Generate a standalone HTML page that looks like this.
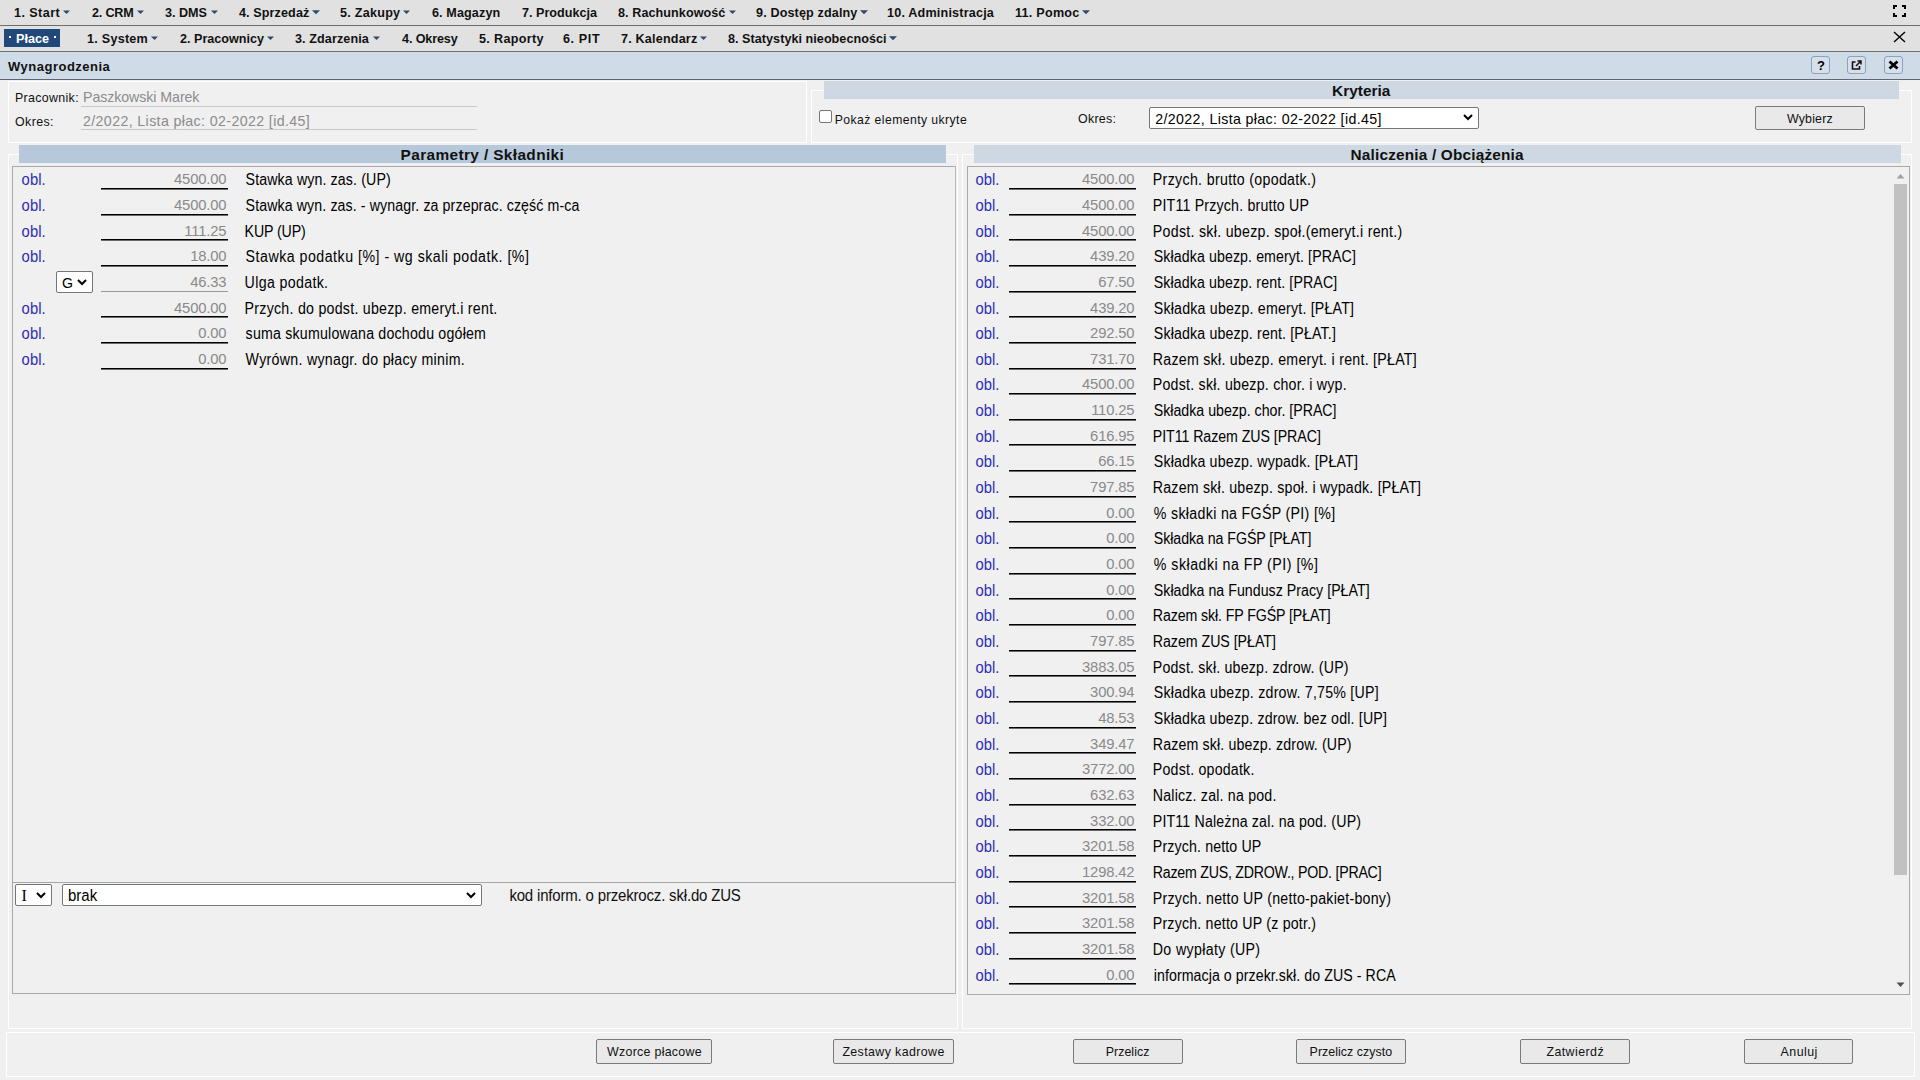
<!DOCTYPE html>
<html><head><meta charset="utf-8"><title>Wynagrodzenia</title>
<style>
html,body{margin:0;padding:0;width:1920px;height:1080px;overflow:hidden;background:#f0f0f0;font-family:"Liberation Sans", sans-serif;}
.t{position:absolute;white-space:pre;line-height:1;}
</style></head><body>
<div style="position:absolute;left:0px;top:0px;width:1920px;height:25px;background:#e1e1e1"></div><div style="position:absolute;left:0px;top:25px;width:1920px;height:1px;background:#6e6e6e"></div><div style="position:absolute;left:0px;top:26px;width:1920px;height:25px;background:#e1e1e1"></div><div style="position:absolute;left:0px;top:51px;width:1920px;height:1px;background:#6e6e6e"></div><div style="position:absolute;left:0px;top:52px;width:1920px;height:27px;background:#cfdbe6"></div><div style="position:absolute;left:0px;top:79px;width:1920px;height:1px;background:#5f6470"></div><svg style="position:absolute;left:63px;top:10px" width="7" height="5" viewBox="0 0 7 4"><path d="M0 0H7L3.5 3.5Z" fill="#2d4a6b"/></svg><svg style="position:absolute;left:137px;top:10px" width="7" height="5" viewBox="0 0 7 4"><path d="M0 0H7L3.5 3.5Z" fill="#2d4a6b"/></svg><svg style="position:absolute;left:211px;top:10px" width="7" height="5" viewBox="0 0 7 4"><path d="M0 0H7L3.5 3.5Z" fill="#2d4a6b"/></svg><svg style="position:absolute;left:312px;top:10px" width="8" height="5" viewBox="0 0 7 4"><path d="M0 0H7L3.5 3.5Z" fill="#2d4a6b"/></svg><svg style="position:absolute;left:403px;top:10px" width="7" height="5" viewBox="0 0 7 4"><path d="M0 0H7L3.5 3.5Z" fill="#2d4a6b"/></svg><svg style="position:absolute;left:729px;top:10px" width="7" height="5" viewBox="0 0 7 4"><path d="M0 0H7L3.5 3.5Z" fill="#2d4a6b"/></svg><svg style="position:absolute;left:860px;top:10px" width="8" height="5" viewBox="0 0 7 4"><path d="M0 0H7L3.5 3.5Z" fill="#2d4a6b"/></svg><svg style="position:absolute;left:1082px;top:10px" width="8" height="5" viewBox="0 0 7 4"><path d="M0 0H7L3.5 3.5Z" fill="#2d4a6b"/></svg><div style="position:absolute;left:4px;top:29px;width:56px;height:18px;background:#20487a"></div><div style="position:absolute;left:9px;top:36px;width:2px;height:2px;background:#fff"></div><div style="position:absolute;left:54px;top:36px;width:2px;height:2px;background:#fff"></div><svg style="position:absolute;left:151px;top:36px" width="7" height="5" viewBox="0 0 7 4"><path d="M0 0H7L3.5 3.5Z" fill="#2d4a6b"/></svg><svg style="position:absolute;left:267px;top:36px" width="7" height="5" viewBox="0 0 7 4"><path d="M0 0H7L3.5 3.5Z" fill="#2d4a6b"/></svg><svg style="position:absolute;left:373px;top:36px" width="7" height="5" viewBox="0 0 7 4"><path d="M0 0H7L3.5 3.5Z" fill="#2d4a6b"/></svg><svg style="position:absolute;left:700px;top:36px" width="7" height="5" viewBox="0 0 7 4"><path d="M0 0H7L3.5 3.5Z" fill="#2d4a6b"/></svg><svg style="position:absolute;left:889px;top:36px" width="8" height="5" viewBox="0 0 7 4"><path d="M0 0H7L3.5 3.5Z" fill="#2d4a6b"/></svg><svg style="position:absolute;left:1893px;top:5px" width="13" height="12" viewBox="0 0 13 12"><path d="M1 4V1H4M9 1H12V4M12 8V11H9M4 11H1V8" fill="none" stroke="#000" stroke-width="2"/></svg><svg style="position:absolute;left:1893px;top:31px" width="13" height="12" viewBox="0 0 13 12"><path d="M1 1L12 11M12 1L1 11" fill="none" stroke="#000" stroke-width="1.4"/></svg><div style="position:absolute;left:1811px;top:56px;width:19px;height:18px;box-sizing:border-box;border:1px solid #8e9fbf;border-radius:3px;background:#d6e0ea"></div><div style="position:absolute;left:1847px;top:56px;width:19px;height:18px;box-sizing:border-box;border:1px solid #8e9fbf;border-radius:3px;background:#d6e0ea"></div><div style="position:absolute;left:1884px;top:56px;width:19px;height:18px;box-sizing:border-box;border:1px solid #8e9fbf;border-radius:3px;background:#d6e0ea"></div><svg style="position:absolute;left:1851px;top:60px" width="11" height="10" viewBox="0 0 11 10"><path d="M4.5 2H1.5V9H8.5V6" fill="none" stroke="#111" stroke-width="1.6"/><path d="M5 6L9.5 1.5M6.5 1H10V4.5" fill="none" stroke="#111" stroke-width="1.5"/></svg><svg style="position:absolute;left:1888px;top:60px" width="11" height="10" viewBox="0 0 11 10"><path d="M1.5 1.5L9.5 8.5M9.5 1.5L1.5 8.5" fill="none" stroke="#000" stroke-width="2.8"/></svg><div style="position:absolute;left:8px;top:81px;width:799px;height:62px;box-sizing:border-box;border:1px solid #fff"></div><div style="position:absolute;left:81px;top:106px;width:396px;height:1px;background:#c8c8c8"></div><div style="position:absolute;left:81px;top:129px;width:396px;height:1px;background:#c8c8c8"></div><div style="position:absolute;left:811px;top:90px;width:1101px;height:53px;box-sizing:border-box;border:1px solid #fff"></div><div style="position:absolute;left:824px;top:81px;width:1075px;height:18px;background:#cdd8e2"></div><div style="position:absolute;left:819px;top:110px;width:13px;height:13px;box-sizing:border-box;border:1px solid #767676;border-radius:2px;background:#fff"></div><div style="position:absolute;left:1149px;top:107px;width:330px;height:22px;box-sizing:border-box;border:1px solid #767676;border-radius:2px;background:#fff"></div><svg style="position:absolute;left:1463px;top:114px" width="10" height="7" viewBox="0 0 10 7"><path d="M1 1L5 5L9 1" fill="none" stroke="#000" stroke-width="2"/></svg><div style="position:absolute;left:1755px;top:106px;width:110px;height:24px;box-sizing:border-box;border:1px solid #7a7a7a;border-radius:2px;background:#e9e9e9"></div><div style="position:absolute;left:8px;top:154px;width:950px;height:875px;box-sizing:border-box;border:1px solid #fff"></div><div style="position:absolute;left:962px;top:154px;width:950px;height:875px;box-sizing:border-box;border:1px solid #fff"></div><div style="position:absolute;left:19px;top:145px;width:927px;height:18px;background:#b6c8da"></div><div style="position:absolute;left:974px;top:145px;width:927px;height:18px;background:#cdd8e2"></div><div style="position:absolute;left:12px;top:166px;width:944px;height:828px;box-sizing:border-box;border:1px solid #aaaaaa;border-right-color:#b8b8b8"></div><div style="position:absolute;left:967px;top:166px;width:943px;height:829px;box-sizing:border-box;border:1px solid #aaaaaa"></div><div style="position:absolute;left:101px;top:188px;width:127px;height:2px;background:linear-gradient(#000 50%,#6a6a6a 50%)"></div><div style="position:absolute;left:101px;top:214px;width:127px;height:2px;background:linear-gradient(#000 50%,#6a6a6a 50%)"></div><div style="position:absolute;left:101px;top:239px;width:127px;height:2px;background:linear-gradient(#000 50%,#6a6a6a 50%)"></div><div style="position:absolute;left:101px;top:265px;width:127px;height:2px;background:linear-gradient(#000 50%,#6a6a6a 50%)"></div><div style="position:absolute;left:101px;top:291px;width:127px;height:1px;background:#9a9a9a"></div><div style="position:absolute;left:56px;top:271px;width:37px;height:22px;box-sizing:border-box;border:1px solid #767676;border-radius:2px;background:#fff"></div><svg style="position:absolute;left:77px;top:279px" width="10" height="7" viewBox="0 0 10 7"><path d="M1 1L5 5L9 1" fill="none" stroke="#000" stroke-width="2"/></svg><div style="position:absolute;left:101px;top:316px;width:127px;height:2px;background:linear-gradient(#000 50%,#6a6a6a 50%)"></div><div style="position:absolute;left:101px;top:342px;width:127px;height:2px;background:linear-gradient(#000 50%,#6a6a6a 50%)"></div><div style="position:absolute;left:101px;top:368px;width:127px;height:2px;background:linear-gradient(#000 50%,#6a6a6a 50%)"></div><div style="position:absolute;left:1009px;top:188px;width:127px;height:2px;background:linear-gradient(#000 50%,#6a6a6a 50%)"></div><div style="position:absolute;left:1009px;top:214px;width:127px;height:2px;background:linear-gradient(#000 50%,#6a6a6a 50%)"></div><div style="position:absolute;left:1009px;top:239px;width:127px;height:2px;background:linear-gradient(#000 50%,#6a6a6a 50%)"></div><div style="position:absolute;left:1009px;top:265px;width:127px;height:2px;background:linear-gradient(#000 50%,#6a6a6a 50%)"></div><div style="position:absolute;left:1009px;top:291px;width:127px;height:2px;background:linear-gradient(#000 50%,#6a6a6a 50%)"></div><div style="position:absolute;left:1009px;top:316px;width:127px;height:2px;background:linear-gradient(#000 50%,#6a6a6a 50%)"></div><div style="position:absolute;left:1009px;top:342px;width:127px;height:2px;background:linear-gradient(#000 50%,#6a6a6a 50%)"></div><div style="position:absolute;left:1009px;top:368px;width:127px;height:2px;background:linear-gradient(#000 50%,#6a6a6a 50%)"></div><div style="position:absolute;left:1009px;top:393px;width:127px;height:2px;background:linear-gradient(#000 50%,#6a6a6a 50%)"></div><div style="position:absolute;left:1009px;top:419px;width:127px;height:2px;background:linear-gradient(#000 50%,#6a6a6a 50%)"></div><div style="position:absolute;left:1009px;top:444px;width:127px;height:2px;background:linear-gradient(#000 50%,#6a6a6a 50%)"></div><div style="position:absolute;left:1009px;top:470px;width:127px;height:2px;background:linear-gradient(#000 50%,#6a6a6a 50%)"></div><div style="position:absolute;left:1009px;top:496px;width:127px;height:2px;background:linear-gradient(#000 50%,#6a6a6a 50%)"></div><div style="position:absolute;left:1009px;top:521px;width:127px;height:2px;background:linear-gradient(#000 50%,#6a6a6a 50%)"></div><div style="position:absolute;left:1009px;top:547px;width:127px;height:2px;background:linear-gradient(#000 50%,#6a6a6a 50%)"></div><div style="position:absolute;left:1009px;top:573px;width:127px;height:2px;background:linear-gradient(#000 50%,#6a6a6a 50%)"></div><div style="position:absolute;left:1009px;top:598px;width:127px;height:2px;background:linear-gradient(#000 50%,#6a6a6a 50%)"></div><div style="position:absolute;left:1009px;top:624px;width:127px;height:2px;background:linear-gradient(#000 50%,#6a6a6a 50%)"></div><div style="position:absolute;left:1009px;top:650px;width:127px;height:2px;background:linear-gradient(#000 50%,#6a6a6a 50%)"></div><div style="position:absolute;left:1009px;top:675px;width:127px;height:2px;background:linear-gradient(#000 50%,#6a6a6a 50%)"></div><div style="position:absolute;left:1009px;top:701px;width:127px;height:2px;background:linear-gradient(#000 50%,#6a6a6a 50%)"></div><div style="position:absolute;left:1009px;top:727px;width:127px;height:2px;background:linear-gradient(#000 50%,#6a6a6a 50%)"></div><div style="position:absolute;left:1009px;top:752px;width:127px;height:2px;background:linear-gradient(#000 50%,#6a6a6a 50%)"></div><div style="position:absolute;left:1009px;top:778px;width:127px;height:2px;background:linear-gradient(#000 50%,#6a6a6a 50%)"></div><div style="position:absolute;left:1009px;top:804px;width:127px;height:2px;background:linear-gradient(#000 50%,#6a6a6a 50%)"></div><div style="position:absolute;left:1009px;top:829px;width:127px;height:2px;background:linear-gradient(#000 50%,#6a6a6a 50%)"></div><div style="position:absolute;left:1009px;top:855px;width:127px;height:2px;background:linear-gradient(#000 50%,#6a6a6a 50%)"></div><div style="position:absolute;left:1009px;top:881px;width:127px;height:2px;background:linear-gradient(#000 50%,#6a6a6a 50%)"></div><div style="position:absolute;left:1009px;top:906px;width:127px;height:2px;background:linear-gradient(#000 50%,#6a6a6a 50%)"></div><div style="position:absolute;left:1009px;top:932px;width:127px;height:2px;background:linear-gradient(#000 50%,#6a6a6a 50%)"></div><div style="position:absolute;left:1009px;top:958px;width:127px;height:2px;background:linear-gradient(#000 50%,#6a6a6a 50%)"></div><div style="position:absolute;left:1009px;top:983px;width:127px;height:2px;background:linear-gradient(#000 50%,#6a6a6a 50%)"></div><div style="position:absolute;left:1894px;top:184px;width:13px;height:691px;background:#c1c1c1"></div><svg style="position:absolute;left:1896px;top:173px" width="9" height="6" viewBox="0 0 9 6"><path d="M0.5 5.5H8.5L4.5 1Z" fill="#a0a0a0"/></svg><svg style="position:absolute;left:1896px;top:982px" width="9" height="6" viewBox="0 0 9 6"><path d="M0.5 0.5H8.5L4.5 5Z" fill="#505050"/></svg><div style="position:absolute;left:13px;top:882px;width:942px;height:1px;background:#a6a6a6"></div><div style="position:absolute;left:15px;top:884px;width:37px;height:22px;box-sizing:border-box;border:1px solid #767676;border-radius:2px;background:#fff"></div><svg style="position:absolute;left:36px;top:892px" width="10" height="7" viewBox="0 0 10 7"><path d="M1 1L5 5L9 1" fill="none" stroke="#000" stroke-width="2"/></svg><div style="position:absolute;left:62px;top:884px;width:420px;height:22px;box-sizing:border-box;border:1px solid #767676;border-radius:2px;background:#fff"></div><svg style="position:absolute;left:466px;top:892px" width="10" height="7" viewBox="0 0 10 7"><path d="M1 1L5 5L9 1" fill="none" stroke="#000" stroke-width="2"/></svg><div style="position:absolute;left:6px;top:1032px;width:1909px;height:45px;box-sizing:border-box;border:1px solid #fff"></div><div style="position:absolute;left:596px;top:1039px;width:116px;height:25px;box-sizing:border-box;border:1px solid #7a7a7a;border-radius:2px;background:#e9e9e9"></div><div style="position:absolute;left:833px;top:1039px;width:121px;height:25px;box-sizing:border-box;border:1px solid #7a7a7a;border-radius:2px;background:#e9e9e9"></div><div style="position:absolute;left:1073px;top:1039px;width:110px;height:25px;box-sizing:border-box;border:1px solid #7a7a7a;border-radius:2px;background:#e9e9e9"></div><div style="position:absolute;left:1296px;top:1039px;width:110px;height:25px;box-sizing:border-box;border:1px solid #7a7a7a;border-radius:2px;background:#e9e9e9"></div><div style="position:absolute;left:1520px;top:1039px;width:110px;height:25px;box-sizing:border-box;border:1px solid #7a7a7a;border-radius:2px;background:#e9e9e9"></div><div style="position:absolute;left:1744px;top:1039px;width:109px;height:25px;box-sizing:border-box;border:1px solid #7a7a7a;border-radius:2px;background:#e9e9e9"></div>
<span class="t" style="top:7.00px;font-size:12.6px;font-weight:700;color:#111;letter-spacing:0.429px;left:14.00px;">1. Start</span><span class="t" style="top:7.00px;font-size:12.6px;font-weight:700;color:#111;letter-spacing:-0.200px;left:92.00px;">2. CRM</span><span class="t" style="top:7.00px;font-size:12.6px;font-weight:700;color:#111;left:165.00px;">3. DMS</span><span class="t" style="top:7.00px;font-size:12.6px;font-weight:700;color:#111;letter-spacing:0.100px;left:239.00px;">4. Sprzedaż</span><span class="t" style="top:7.00px;font-size:12.6px;font-weight:700;color:#111;letter-spacing:0.250px;left:340.00px;">5. Zakupy</span><span class="t" style="top:7.00px;font-size:12.6px;font-weight:700;color:#111;letter-spacing:0.111px;left:432.00px;">6. Magazyn</span><span class="t" style="top:7.00px;font-size:12.6px;font-weight:700;color:#111;left:522.00px;">7. Produkcja</span><span class="t" style="top:7.00px;font-size:12.6px;font-weight:700;color:#111;letter-spacing:0.071px;left:618.00px;">8. Rachunkowość</span><span class="t" style="top:7.00px;font-size:12.6px;font-weight:700;color:#111;letter-spacing:0.133px;left:756.00px;">9. Dostęp zdalny</span><span class="t" style="top:7.00px;font-size:12.6px;font-weight:700;color:#111;letter-spacing:0.188px;left:887.00px;">10. Administracja</span><span class="t" style="top:7.00px;font-size:12.6px;font-weight:700;color:#111;letter-spacing:0.250px;left:1015.00px;">11. Pomoc</span><span class="t" style="top:33.00px;font-size:12.6px;font-weight:700;color:#fff;left:16.00px;">Płace</span><span class="t" style="top:33.00px;font-size:12.6px;font-weight:700;color:#111;letter-spacing:0.250px;left:87.00px;">1. System</span><span class="t" style="top:33.00px;font-size:12.6px;font-weight:700;color:#111;left:180.00px;">2. Pracownicy</span><span class="t" style="top:33.00px;font-size:12.6px;font-weight:700;color:#111;letter-spacing:0.091px;left:295.00px;">3. Zdarzenia</span><span class="t" style="top:33.00px;font-size:12.6px;font-weight:700;color:#111;letter-spacing:-0.125px;left:402.00px;">4. Okresy</span><span class="t" style="top:33.00px;font-size:12.6px;font-weight:700;color:#111;letter-spacing:0.333px;left:479.00px;">5. Raporty</span><span class="t" style="top:33.00px;font-size:12.6px;font-weight:700;color:#111;letter-spacing:0.600px;left:563.00px;">6. PIT</span><span class="t" style="top:33.00px;font-size:12.6px;font-weight:700;color:#111;letter-spacing:0.182px;left:621.00px;">7. Kalendarz</span><span class="t" style="top:33.00px;font-size:12.6px;font-weight:700;color:#111;letter-spacing:0.040px;left:728.00px;">8. Statystyki nieobecności</span><span class="t" style="top:60.00px;font-size:13px;font-weight:700;color:#111;letter-spacing:0.500px;left:8.00px;">Wynagrodzenia</span><span class="t" style="top:59.00px;font-size:13px;font-weight:700;color:#000;left:1817.00px;">?</span><span class="t" style="top:92.00px;font-size:12.4px;font-weight:400;color:#111;letter-spacing:0.333px;left:15.00px;">Pracownik:</span><span class="t" style="top:90.00px;font-size:14.2px;font-weight:400;color:#8c8c8c;letter-spacing:-0.067px;left:83.00px;">Paszkowski Marek</span><span class="t" style="top:116.00px;font-size:12.4px;font-weight:400;color:#111;letter-spacing:0.400px;left:15.00px;">Okres:</span><span class="t" style="top:114.00px;font-size:14.2px;font-weight:400;color:#8c8c8c;letter-spacing:0.382px;left:83.00px;">2/2022, Lista płac: 02-2022 [id.45]</span><span class="t" style="top:83.00px;font-size:15.4px;font-weight:700;color:#111;letter-spacing:0.036px;left:1332.00px;">Kryteria</span><span class="t" style="top:114.00px;font-size:12.2px;font-weight:400;color:#111;letter-spacing:0.430px;left:834.79px;">Pokaż elementy ukryte</span><span class="t" style="top:113.00px;font-size:12.4px;font-weight:400;color:#111;letter-spacing:0.300px;left:1078.00px;">Okres:</span><span class="t" style="top:112.00px;font-size:14.2px;font-weight:400;color:#000;letter-spacing:0.368px;left:1155.19px;">2/2022, Lista płac: 02-2022 [id.45]</span><span class="t" style="top:113.00px;font-size:12.4px;font-weight:400;color:#111;letter-spacing:0.167px;left:1787.00px;">Wybierz</span><span class="t" style="top:147.00px;font-size:15.4px;font-weight:700;color:#111;letter-spacing:0.375px;left:400.60px;">Parametry / Składniki</span><span class="t" style="top:147.00px;font-size:15.4px;font-weight:700;color:#111;letter-spacing:0.164px;left:1350.60px;">Naliczenia / Obciążenia</span><span class="t" style="top:173.00px;font-size:14.8px;font-weight:400;color:#2e2eb4;letter-spacing:0.067px;left:21.60px;transform:scaleY(1.09);transform-origin:0 12px;">obl.</span><span class="t" style="top:172.00px;font-size:14.8px;font-weight:400;color:#8a8a8a;letter-spacing:-0.150px;right:1693.60px;transform:scaleY(1.04);transform-origin:0 12px;">4500.00</span><span class="t" style="top:173.00px;font-size:14.2px;font-weight:400;color:#000;letter-spacing:0.120px;left:245.60px;transform:scaleY(1.115);transform-origin:0 12px;">Stawka wyn. zas. (UP)</span><span class="t" style="top:199.00px;font-size:14.8px;font-weight:400;color:#2e2eb4;letter-spacing:0.067px;left:21.60px;transform:scaleY(1.09);transform-origin:0 12px;">obl.</span><span class="t" style="top:198.00px;font-size:14.8px;font-weight:400;color:#8a8a8a;letter-spacing:-0.150px;right:1693.60px;transform:scaleY(1.04);transform-origin:0 12px;">4500.00</span><span class="t" style="top:199.00px;font-size:14.2px;font-weight:400;color:#000;letter-spacing:0.102px;left:245.60px;transform:scaleY(1.115);transform-origin:0 12px;">Stawka wyn. zas. - wynagr. za przeprac. część m-ca</span><span class="t" style="top:225.00px;font-size:14.8px;font-weight:400;color:#2e2eb4;letter-spacing:0.067px;left:21.60px;transform:scaleY(1.09);transform-origin:0 12px;">obl.</span><span class="t" style="top:224.00px;font-size:14.8px;font-weight:400;color:#8a8a8a;letter-spacing:-0.150px;right:1693.60px;transform:scaleY(1.04);transform-origin:0 12px;">111.25</span><span class="t" style="top:225.00px;font-size:14.2px;font-weight:400;color:#000;letter-spacing:-0.114px;left:244.60px;transform:scaleY(1.115);transform-origin:0 12px;">KUP (UP)</span><span class="t" style="top:250.00px;font-size:14.8px;font-weight:400;color:#2e2eb4;letter-spacing:0.067px;left:21.60px;transform:scaleY(1.09);transform-origin:0 12px;">obl.</span><span class="t" style="top:249.00px;font-size:14.8px;font-weight:400;color:#8a8a8a;letter-spacing:-0.150px;right:1693.60px;transform:scaleY(1.04);transform-origin:0 12px;">18.00</span><span class="t" style="top:250.00px;font-size:14.2px;font-weight:400;color:#000;letter-spacing:0.498px;left:245.60px;transform:scaleY(1.115);transform-origin:0 12px;">Stawka podatku [%] - wg skali podatk. [%]</span><span class="t" style="top:276.00px;font-size:14.2px;font-weight:400;color:#000;left:62.00px;">G</span><span class="t" style="top:275.00px;font-size:14.8px;font-weight:400;color:#8a8a8a;letter-spacing:-0.150px;right:1693.60px;transform:scaleY(1.04);transform-origin:0 12px;">46.33</span><span class="t" style="top:276.00px;font-size:14.2px;font-weight:400;color:#000;letter-spacing:0.345px;left:244.60px;transform:scaleY(1.115);transform-origin:0 12px;">Ulga podatk.</span><span class="t" style="top:302.00px;font-size:14.8px;font-weight:400;color:#2e2eb4;letter-spacing:0.067px;left:21.60px;transform:scaleY(1.09);transform-origin:0 12px;">obl.</span><span class="t" style="top:301.00px;font-size:14.8px;font-weight:400;color:#8a8a8a;letter-spacing:-0.150px;right:1693.60px;transform:scaleY(1.04);transform-origin:0 12px;">4500.00</span><span class="t" style="top:302.00px;font-size:14.2px;font-weight:400;color:#000;letter-spacing:0.258px;left:244.60px;transform:scaleY(1.115);transform-origin:0 12px;">Przych. do podst. ubezp. emeryt.i rent.</span><span class="t" style="top:327.00px;font-size:14.8px;font-weight:400;color:#2e2eb4;letter-spacing:0.067px;left:21.60px;transform:scaleY(1.09);transform-origin:0 12px;">obl.</span><span class="t" style="top:326.00px;font-size:14.8px;font-weight:400;color:#8a8a8a;letter-spacing:-0.150px;right:1693.60px;transform:scaleY(1.04);transform-origin:0 12px;">0.00</span><span class="t" style="top:327.00px;font-size:14.2px;font-weight:400;color:#000;letter-spacing:0.203px;left:245.60px;transform:scaleY(1.115);transform-origin:0 12px;">suma skumulowana dochodu ogółem</span><span class="t" style="top:353.00px;font-size:14.8px;font-weight:400;color:#2e2eb4;letter-spacing:0.067px;left:21.60px;transform:scaleY(1.09);transform-origin:0 12px;">obl.</span><span class="t" style="top:352.00px;font-size:14.8px;font-weight:400;color:#8a8a8a;letter-spacing:-0.150px;right:1693.60px;transform:scaleY(1.04);transform-origin:0 12px;">0.00</span><span class="t" style="top:353.00px;font-size:14.2px;font-weight:400;color:#000;letter-spacing:0.290px;left:245.60px;transform:scaleY(1.115);transform-origin:0 12px;">Wyrówn. wynagr. do płacy minim.</span><span class="t" style="top:173.00px;font-size:14.8px;font-weight:400;color:#2e2eb4;letter-spacing:0.067px;left:975.39px;transform:scaleY(1.09);transform-origin:0 12px;">obl.</span><span class="t" style="top:172.00px;font-size:14.8px;font-weight:400;color:#8a8a8a;letter-spacing:-0.150px;right:785.60px;transform:scaleY(1.04);transform-origin:0 12px;">4500.00</span><span class="t" style="top:173.00px;font-size:14.2px;font-weight:400;color:#000;letter-spacing:0.329px;left:1152.79px;transform:scaleY(1.115);transform-origin:0 12px;">Przych. brutto (opodatk.)</span><span class="t" style="top:199.00px;font-size:14.8px;font-weight:400;color:#2e2eb4;letter-spacing:0.067px;left:975.39px;transform:scaleY(1.09);transform-origin:0 12px;">obl.</span><span class="t" style="top:198.00px;font-size:14.8px;font-weight:400;color:#8a8a8a;letter-spacing:-0.150px;right:785.60px;transform:scaleY(1.04);transform-origin:0 12px;">4500.00</span><span class="t" style="top:199.00px;font-size:14.2px;font-weight:400;color:#000;letter-spacing:0.191px;left:1152.79px;transform:scaleY(1.115);transform-origin:0 12px;">PIT11 Przych. brutto UP</span><span class="t" style="top:225.00px;font-size:14.8px;font-weight:400;color:#2e2eb4;letter-spacing:0.067px;left:975.39px;transform:scaleY(1.09);transform-origin:0 12px;">obl.</span><span class="t" style="top:224.00px;font-size:14.8px;font-weight:400;color:#8a8a8a;letter-spacing:-0.150px;right:785.60px;transform:scaleY(1.04);transform-origin:0 12px;">4500.00</span><span class="t" style="top:225.00px;font-size:14.2px;font-weight:400;color:#000;letter-spacing:0.290px;left:1152.79px;transform:scaleY(1.115);transform-origin:0 12px;">Podst. skł. ubezp. społ.(emeryt.i rent.)</span><span class="t" style="top:250.00px;font-size:14.8px;font-weight:400;color:#2e2eb4;letter-spacing:0.067px;left:975.39px;transform:scaleY(1.09);transform-origin:0 12px;">obl.</span><span class="t" style="top:249.00px;font-size:14.8px;font-weight:400;color:#8a8a8a;letter-spacing:-0.150px;right:785.60px;transform:scaleY(1.04);transform-origin:0 12px;">439.20</span><span class="t" style="top:250.00px;font-size:14.2px;font-weight:400;color:#000;letter-spacing:0.093px;left:1153.79px;transform:scaleY(1.115);transform-origin:0 12px;">Składka ubezp. emeryt. [PRAC]</span><span class="t" style="top:276.00px;font-size:14.8px;font-weight:400;color:#2e2eb4;letter-spacing:0.067px;left:975.39px;transform:scaleY(1.09);transform-origin:0 12px;">obl.</span><span class="t" style="top:275.00px;font-size:14.8px;font-weight:400;color:#8a8a8a;letter-spacing:-0.150px;right:785.60px;transform:scaleY(1.04);transform-origin:0 12px;">67.50</span><span class="t" style="top:276.00px;font-size:14.2px;font-weight:400;color:#000;letter-spacing:0.108px;left:1153.79px;transform:scaleY(1.115);transform-origin:0 12px;">Składka ubezp. rent. [PRAC]</span><span class="t" style="top:302.00px;font-size:14.8px;font-weight:400;color:#2e2eb4;letter-spacing:0.067px;left:975.39px;transform:scaleY(1.09);transform-origin:0 12px;">obl.</span><span class="t" style="top:301.00px;font-size:14.8px;font-weight:400;color:#8a8a8a;letter-spacing:-0.150px;right:785.60px;transform:scaleY(1.04);transform-origin:0 12px;">439.20</span><span class="t" style="top:302.00px;font-size:14.2px;font-weight:400;color:#000;letter-spacing:0.204px;left:1153.79px;transform:scaleY(1.115);transform-origin:0 12px;">Składka ubezp. emeryt. [PŁAT]</span><span class="t" style="top:327.00px;font-size:14.8px;font-weight:400;color:#2e2eb4;letter-spacing:0.067px;left:975.39px;transform:scaleY(1.09);transform-origin:0 12px;">obl.</span><span class="t" style="top:326.00px;font-size:14.8px;font-weight:400;color:#8a8a8a;letter-spacing:-0.150px;right:785.60px;transform:scaleY(1.04);transform-origin:0 12px;">292.50</span><span class="t" style="top:327.00px;font-size:14.2px;font-weight:400;color:#000;letter-spacing:0.152px;left:1153.79px;transform:scaleY(1.115);transform-origin:0 12px;">Składka ubezp. rent. [PŁAT.]</span><span class="t" style="top:353.00px;font-size:14.8px;font-weight:400;color:#2e2eb4;letter-spacing:0.067px;left:975.39px;transform:scaleY(1.09);transform-origin:0 12px;">obl.</span><span class="t" style="top:352.00px;font-size:14.8px;font-weight:400;color:#8a8a8a;letter-spacing:-0.150px;right:785.60px;transform:scaleY(1.04);transform-origin:0 12px;">731.70</span><span class="t" style="top:353.00px;font-size:14.2px;font-weight:400;color:#000;letter-spacing:0.264px;left:1152.79px;transform:scaleY(1.115);transform-origin:0 12px;">Razem skł. ubezp. emeryt. i rent. [PŁAT]</span><span class="t" style="top:378.00px;font-size:14.8px;font-weight:400;color:#2e2eb4;letter-spacing:0.067px;left:975.39px;transform:scaleY(1.09);transform-origin:0 12px;">obl.</span><span class="t" style="top:377.00px;font-size:14.8px;font-weight:400;color:#8a8a8a;letter-spacing:-0.150px;right:785.60px;transform:scaleY(1.04);transform-origin:0 12px;">4500.00</span><span class="t" style="top:378.00px;font-size:14.2px;font-weight:400;color:#000;letter-spacing:0.233px;left:1152.79px;transform:scaleY(1.115);transform-origin:0 12px;">Podst. skł. ubezp. chor. i wyp.</span><span class="t" style="top:404.00px;font-size:14.8px;font-weight:400;color:#2e2eb4;letter-spacing:0.067px;left:975.39px;transform:scaleY(1.09);transform-origin:0 12px;">obl.</span><span class="t" style="top:403.00px;font-size:14.8px;font-weight:400;color:#8a8a8a;letter-spacing:-0.150px;right:785.60px;transform:scaleY(1.04);transform-origin:0 12px;">110.25</span><span class="t" style="top:404.00px;font-size:14.2px;font-weight:400;color:#000;letter-spacing:-0.008px;left:1153.79px;transform:scaleY(1.115);transform-origin:0 12px;">Składka ubezp. chor. [PRAC]</span><span class="t" style="top:430.00px;font-size:14.8px;font-weight:400;color:#2e2eb4;letter-spacing:0.067px;left:975.39px;transform:scaleY(1.09);transform-origin:0 12px;">obl.</span><span class="t" style="top:429.00px;font-size:14.8px;font-weight:400;color:#8a8a8a;letter-spacing:-0.150px;right:785.60px;transform:scaleY(1.04);transform-origin:0 12px;">616.95</span><span class="t" style="top:430.00px;font-size:14.2px;font-weight:400;color:#000;letter-spacing:-0.057px;left:1152.79px;transform:scaleY(1.115);transform-origin:0 12px;">PIT11 Razem ZUS [PRAC]</span><span class="t" style="top:455.00px;font-size:14.8px;font-weight:400;color:#2e2eb4;letter-spacing:0.067px;left:975.39px;transform:scaleY(1.09);transform-origin:0 12px;">obl.</span><span class="t" style="top:454.00px;font-size:14.8px;font-weight:400;color:#8a8a8a;letter-spacing:-0.150px;right:785.60px;transform:scaleY(1.04);transform-origin:0 12px;">66.15</span><span class="t" style="top:455.00px;font-size:14.2px;font-weight:400;color:#000;letter-spacing:0.171px;left:1153.79px;transform:scaleY(1.115);transform-origin:0 12px;">Składka ubezp. wypadk. [PŁAT]</span><span class="t" style="top:481.00px;font-size:14.8px;font-weight:400;color:#2e2eb4;letter-spacing:0.067px;left:975.39px;transform:scaleY(1.09);transform-origin:0 12px;">obl.</span><span class="t" style="top:480.00px;font-size:14.8px;font-weight:400;color:#8a8a8a;letter-spacing:-0.150px;right:785.60px;transform:scaleY(1.04);transform-origin:0 12px;">797.85</span><span class="t" style="top:481.00px;font-size:14.2px;font-weight:400;color:#000;letter-spacing:0.213px;left:1152.79px;transform:scaleY(1.115);transform-origin:0 12px;">Razem skł. ubezp. społ. i wypadk. [PŁAT]</span><span class="t" style="top:507.00px;font-size:14.8px;font-weight:400;color:#2e2eb4;letter-spacing:0.067px;left:975.39px;transform:scaleY(1.09);transform-origin:0 12px;">obl.</span><span class="t" style="top:506.00px;font-size:14.8px;font-weight:400;color:#8a8a8a;letter-spacing:-0.150px;right:785.60px;transform:scaleY(1.04);transform-origin:0 12px;">0.00</span><span class="t" style="top:507.00px;font-size:14.2px;font-weight:400;color:#000;letter-spacing:0.324px;left:1153.79px;transform:scaleY(1.115);transform-origin:0 12px;">% składki na FGŚP (PI) [%]</span><span class="t" style="top:532.00px;font-size:14.8px;font-weight:400;color:#2e2eb4;letter-spacing:0.067px;left:975.39px;transform:scaleY(1.09);transform-origin:0 12px;">obl.</span><span class="t" style="top:531.00px;font-size:14.8px;font-weight:400;color:#8a8a8a;letter-spacing:-0.150px;right:785.60px;transform:scaleY(1.04);transform-origin:0 12px;">0.00</span><span class="t" style="top:532.00px;font-size:14.2px;font-weight:400;color:#000;letter-spacing:-0.057px;left:1153.79px;transform:scaleY(1.115);transform-origin:0 12px;">Składka na FGŚP [PŁAT]</span><span class="t" style="top:558.00px;font-size:14.8px;font-weight:400;color:#2e2eb4;letter-spacing:0.067px;left:975.39px;transform:scaleY(1.09);transform-origin:0 12px;">obl.</span><span class="t" style="top:557.00px;font-size:14.8px;font-weight:400;color:#8a8a8a;letter-spacing:-0.150px;right:785.60px;transform:scaleY(1.04);transform-origin:0 12px;">0.00</span><span class="t" style="top:558.00px;font-size:14.2px;font-weight:400;color:#000;letter-spacing:0.496px;left:1153.79px;transform:scaleY(1.115);transform-origin:0 12px;">% składki na FP (PI) [%]</span><span class="t" style="top:584.00px;font-size:14.8px;font-weight:400;color:#2e2eb4;letter-spacing:0.067px;left:975.39px;transform:scaleY(1.09);transform-origin:0 12px;">obl.</span><span class="t" style="top:583.00px;font-size:14.8px;font-weight:400;color:#8a8a8a;letter-spacing:-0.150px;right:785.60px;transform:scaleY(1.04);transform-origin:0 12px;">0.00</span><span class="t" style="top:584.00px;font-size:14.2px;font-weight:400;color:#000;letter-spacing:0.027px;left:1153.79px;transform:scaleY(1.115);transform-origin:0 12px;">Składka na Fundusz Pracy [PŁAT]</span><span class="t" style="top:609.00px;font-size:14.8px;font-weight:400;color:#2e2eb4;letter-spacing:0.067px;left:975.39px;transform:scaleY(1.09);transform-origin:0 12px;">obl.</span><span class="t" style="top:608.00px;font-size:14.8px;font-weight:400;color:#8a8a8a;letter-spacing:-0.150px;right:785.60px;transform:scaleY(1.04);transform-origin:0 12px;">0.00</span><span class="t" style="top:609.00px;font-size:14.2px;font-weight:400;color:#000;letter-spacing:-0.108px;left:1152.79px;transform:scaleY(1.115);transform-origin:0 12px;">Razem skł. FP FGŚP [PŁAT]</span><span class="t" style="top:635.00px;font-size:14.8px;font-weight:400;color:#2e2eb4;letter-spacing:0.067px;left:975.39px;transform:scaleY(1.09);transform-origin:0 12px;">obl.</span><span class="t" style="top:634.00px;font-size:14.8px;font-weight:400;color:#8a8a8a;letter-spacing:-0.150px;right:785.60px;transform:scaleY(1.04);transform-origin:0 12px;">797.85</span><span class="t" style="top:635.00px;font-size:14.2px;font-weight:400;color:#000;letter-spacing:-0.027px;left:1152.79px;transform:scaleY(1.115);transform-origin:0 12px;">Razem ZUS [PŁAT]</span><span class="t" style="top:661.00px;font-size:14.8px;font-weight:400;color:#2e2eb4;letter-spacing:0.067px;left:975.39px;transform:scaleY(1.09);transform-origin:0 12px;">obl.</span><span class="t" style="top:660.00px;font-size:14.8px;font-weight:400;color:#8a8a8a;letter-spacing:-0.150px;right:785.60px;transform:scaleY(1.04);transform-origin:0 12px;">3883.05</span><span class="t" style="top:661.00px;font-size:14.2px;font-weight:400;color:#000;letter-spacing:0.197px;left:1152.79px;transform:scaleY(1.115);transform-origin:0 12px;">Podst. skł. ubezp. zdrow. (UP)</span><span class="t" style="top:686.00px;font-size:14.8px;font-weight:400;color:#2e2eb4;letter-spacing:0.067px;left:975.39px;transform:scaleY(1.09);transform-origin:0 12px;">obl.</span><span class="t" style="top:685.00px;font-size:14.8px;font-weight:400;color:#8a8a8a;letter-spacing:-0.150px;right:785.60px;transform:scaleY(1.04);transform-origin:0 12px;">300.94</span><span class="t" style="top:686.00px;font-size:14.2px;font-weight:400;color:#000;letter-spacing:0.232px;left:1153.79px;transform:scaleY(1.115);transform-origin:0 12px;">Składka ubezp. zdrow. 7,75% [UP]</span><span class="t" style="top:712.00px;font-size:14.8px;font-weight:400;color:#2e2eb4;letter-spacing:0.067px;left:975.39px;transform:scaleY(1.09);transform-origin:0 12px;">obl.</span><span class="t" style="top:711.00px;font-size:14.8px;font-weight:400;color:#8a8a8a;letter-spacing:-0.150px;right:785.60px;transform:scaleY(1.04);transform-origin:0 12px;">48.53</span><span class="t" style="top:712.00px;font-size:14.2px;font-weight:400;color:#000;letter-spacing:0.176px;left:1153.79px;transform:scaleY(1.115);transform-origin:0 12px;">Składka ubezp. zdrow. bez odl. [UP]</span><span class="t" style="top:738.00px;font-size:14.8px;font-weight:400;color:#2e2eb4;letter-spacing:0.067px;left:975.39px;transform:scaleY(1.09);transform-origin:0 12px;">obl.</span><span class="t" style="top:737.00px;font-size:14.8px;font-weight:400;color:#8a8a8a;letter-spacing:-0.150px;right:785.60px;transform:scaleY(1.04);transform-origin:0 12px;">349.47</span><span class="t" style="top:738.00px;font-size:14.2px;font-weight:400;color:#000;letter-spacing:0.143px;left:1152.79px;transform:scaleY(1.115);transform-origin:0 12px;">Razem skł. ubezp. zdrow. (UP)</span><span class="t" style="top:763.00px;font-size:14.8px;font-weight:400;color:#2e2eb4;letter-spacing:0.067px;left:975.39px;transform:scaleY(1.09);transform-origin:0 12px;">obl.</span><span class="t" style="top:762.00px;font-size:14.8px;font-weight:400;color:#8a8a8a;letter-spacing:-0.150px;right:785.60px;transform:scaleY(1.04);transform-origin:0 12px;">3772.00</span><span class="t" style="top:763.00px;font-size:14.2px;font-weight:400;color:#000;letter-spacing:0.214px;left:1152.79px;transform:scaleY(1.115);transform-origin:0 12px;">Podst. opodatk.</span><span class="t" style="top:789.00px;font-size:14.8px;font-weight:400;color:#2e2eb4;letter-spacing:0.067px;left:975.39px;transform:scaleY(1.09);transform-origin:0 12px;">obl.</span><span class="t" style="top:788.00px;font-size:14.8px;font-weight:400;color:#8a8a8a;letter-spacing:-0.150px;right:785.60px;transform:scaleY(1.04);transform-origin:0 12px;">632.63</span><span class="t" style="top:789.00px;font-size:14.2px;font-weight:400;color:#000;letter-spacing:0.195px;left:1152.79px;transform:scaleY(1.115);transform-origin:0 12px;">Nalicz. zal. na pod.</span><span class="t" style="top:815.00px;font-size:14.8px;font-weight:400;color:#2e2eb4;letter-spacing:0.067px;left:975.39px;transform:scaleY(1.09);transform-origin:0 12px;">obl.</span><span class="t" style="top:814.00px;font-size:14.8px;font-weight:400;color:#8a8a8a;letter-spacing:-0.150px;right:785.60px;transform:scaleY(1.04);transform-origin:0 12px;">332.00</span><span class="t" style="top:815.00px;font-size:14.2px;font-weight:400;color:#000;letter-spacing:0.167px;left:1152.79px;transform:scaleY(1.115);transform-origin:0 12px;">PIT11 Należna zal. na pod. (UP)</span><span class="t" style="top:840.00px;font-size:14.8px;font-weight:400;color:#2e2eb4;letter-spacing:0.067px;left:975.39px;transform:scaleY(1.09);transform-origin:0 12px;">obl.</span><span class="t" style="top:839.00px;font-size:14.8px;font-weight:400;color:#8a8a8a;letter-spacing:-0.150px;right:785.60px;transform:scaleY(1.04);transform-origin:0 12px;">3201.58</span><span class="t" style="top:840.00px;font-size:14.2px;font-weight:400;color:#000;letter-spacing:0.140px;left:1152.79px;transform:scaleY(1.115);transform-origin:0 12px;">Przych. netto UP</span><span class="t" style="top:866.00px;font-size:14.8px;font-weight:400;color:#2e2eb4;letter-spacing:0.067px;left:975.39px;transform:scaleY(1.09);transform-origin:0 12px;">obl.</span><span class="t" style="top:865.00px;font-size:14.8px;font-weight:400;color:#8a8a8a;letter-spacing:-0.150px;right:785.60px;transform:scaleY(1.04);transform-origin:0 12px;">1298.42</span><span class="t" style="top:866.00px;font-size:14.2px;font-weight:400;color:#000;letter-spacing:-0.238px;left:1152.79px;transform:scaleY(1.115);transform-origin:0 12px;">Razem ZUS, ZDROW., POD. [PRAC]</span><span class="t" style="top:892.00px;font-size:14.8px;font-weight:400;color:#2e2eb4;letter-spacing:0.067px;left:975.39px;transform:scaleY(1.09);transform-origin:0 12px;">obl.</span><span class="t" style="top:891.00px;font-size:14.8px;font-weight:400;color:#8a8a8a;letter-spacing:-0.150px;right:785.60px;transform:scaleY(1.04);transform-origin:0 12px;">3201.58</span><span class="t" style="top:892.00px;font-size:14.2px;font-weight:400;color:#000;letter-spacing:0.254px;left:1152.79px;transform:scaleY(1.115);transform-origin:0 12px;">Przych. netto UP (netto-pakiet-bony)</span><span class="t" style="top:917.00px;font-size:14.8px;font-weight:400;color:#2e2eb4;letter-spacing:0.067px;left:975.39px;transform:scaleY(1.09);transform-origin:0 12px;">obl.</span><span class="t" style="top:916.00px;font-size:14.8px;font-weight:400;color:#8a8a8a;letter-spacing:-0.150px;right:785.60px;transform:scaleY(1.04);transform-origin:0 12px;">3201.58</span><span class="t" style="top:917.00px;font-size:14.2px;font-weight:400;color:#000;letter-spacing:0.200px;left:1152.79px;transform:scaleY(1.115);transform-origin:0 12px;">Przych. netto UP (z potr.)</span><span class="t" style="top:943.00px;font-size:14.8px;font-weight:400;color:#2e2eb4;letter-spacing:0.067px;left:975.39px;transform:scaleY(1.09);transform-origin:0 12px;">obl.</span><span class="t" style="top:942.00px;font-size:14.8px;font-weight:400;color:#8a8a8a;letter-spacing:-0.150px;right:785.60px;transform:scaleY(1.04);transform-origin:0 12px;">3201.58</span><span class="t" style="top:943.00px;font-size:14.2px;font-weight:400;color:#000;letter-spacing:0.343px;left:1152.79px;transform:scaleY(1.115);transform-origin:0 12px;">Do wypłaty (UP)</span><span class="t" style="top:969.00px;font-size:14.8px;font-weight:400;color:#2e2eb4;letter-spacing:0.067px;left:975.39px;transform:scaleY(1.09);transform-origin:0 12px;">obl.</span><span class="t" style="top:968.00px;font-size:14.8px;font-weight:400;color:#8a8a8a;letter-spacing:-0.150px;right:785.60px;transform:scaleY(1.04);transform-origin:0 12px;">0.00</span><span class="t" style="top:969.00px;font-size:14.2px;font-weight:400;color:#000;letter-spacing:0.061px;left:1153.79px;transform:scaleY(1.115);transform-origin:0 12px;">informacja o przekr.skł. do ZUS - RCA</span><span class="t" style="top:888.00px;font-size:16px;font-weight:400;color:#000;left:21.60px;font-family:'Liberation Serif',serif;">I</span><span class="t" style="top:888.00px;font-size:15px;font-weight:400;color:#000;left:68.00px;transform:scaleY(1.055);transform-origin:0 13px;">brak</span><span class="t" style="top:888.00px;font-size:15px;font-weight:400;color:#111;letter-spacing:-0.179px;left:509.39px;transform:scaleY(1.055);transform-origin:0 13px;">kod inform. o przekrocz. skł.do ZUS</span><span class="t" style="top:1046.00px;font-size:12.4px;font-weight:400;color:#111;letter-spacing:0.288px;left:607.00px;">Wzorce płacowe</span><span class="t" style="top:1046.00px;font-size:12.4px;font-weight:400;color:#111;letter-spacing:0.393px;left:842.39px;">Zestawy kadrowe</span><span class="t" style="top:1046.00px;font-size:12.4px;font-weight:400;color:#111;letter-spacing:0.029px;left:1105.79px;">Przelicz</span><span class="t" style="top:1046.00px;font-size:12.4px;font-weight:400;color:#111;letter-spacing:0.043px;left:1309.60px;">Przelicz czysto</span><span class="t" style="top:1046.00px;font-size:12.4px;font-weight:400;color:#111;letter-spacing:0.438px;left:1546.39px;">Zatwierdź</span><span class="t" style="top:1046.00px;font-size:12.4px;font-weight:400;color:#111;letter-spacing:0.440px;left:1780.60px;">Anuluj</span>
</body></html>
